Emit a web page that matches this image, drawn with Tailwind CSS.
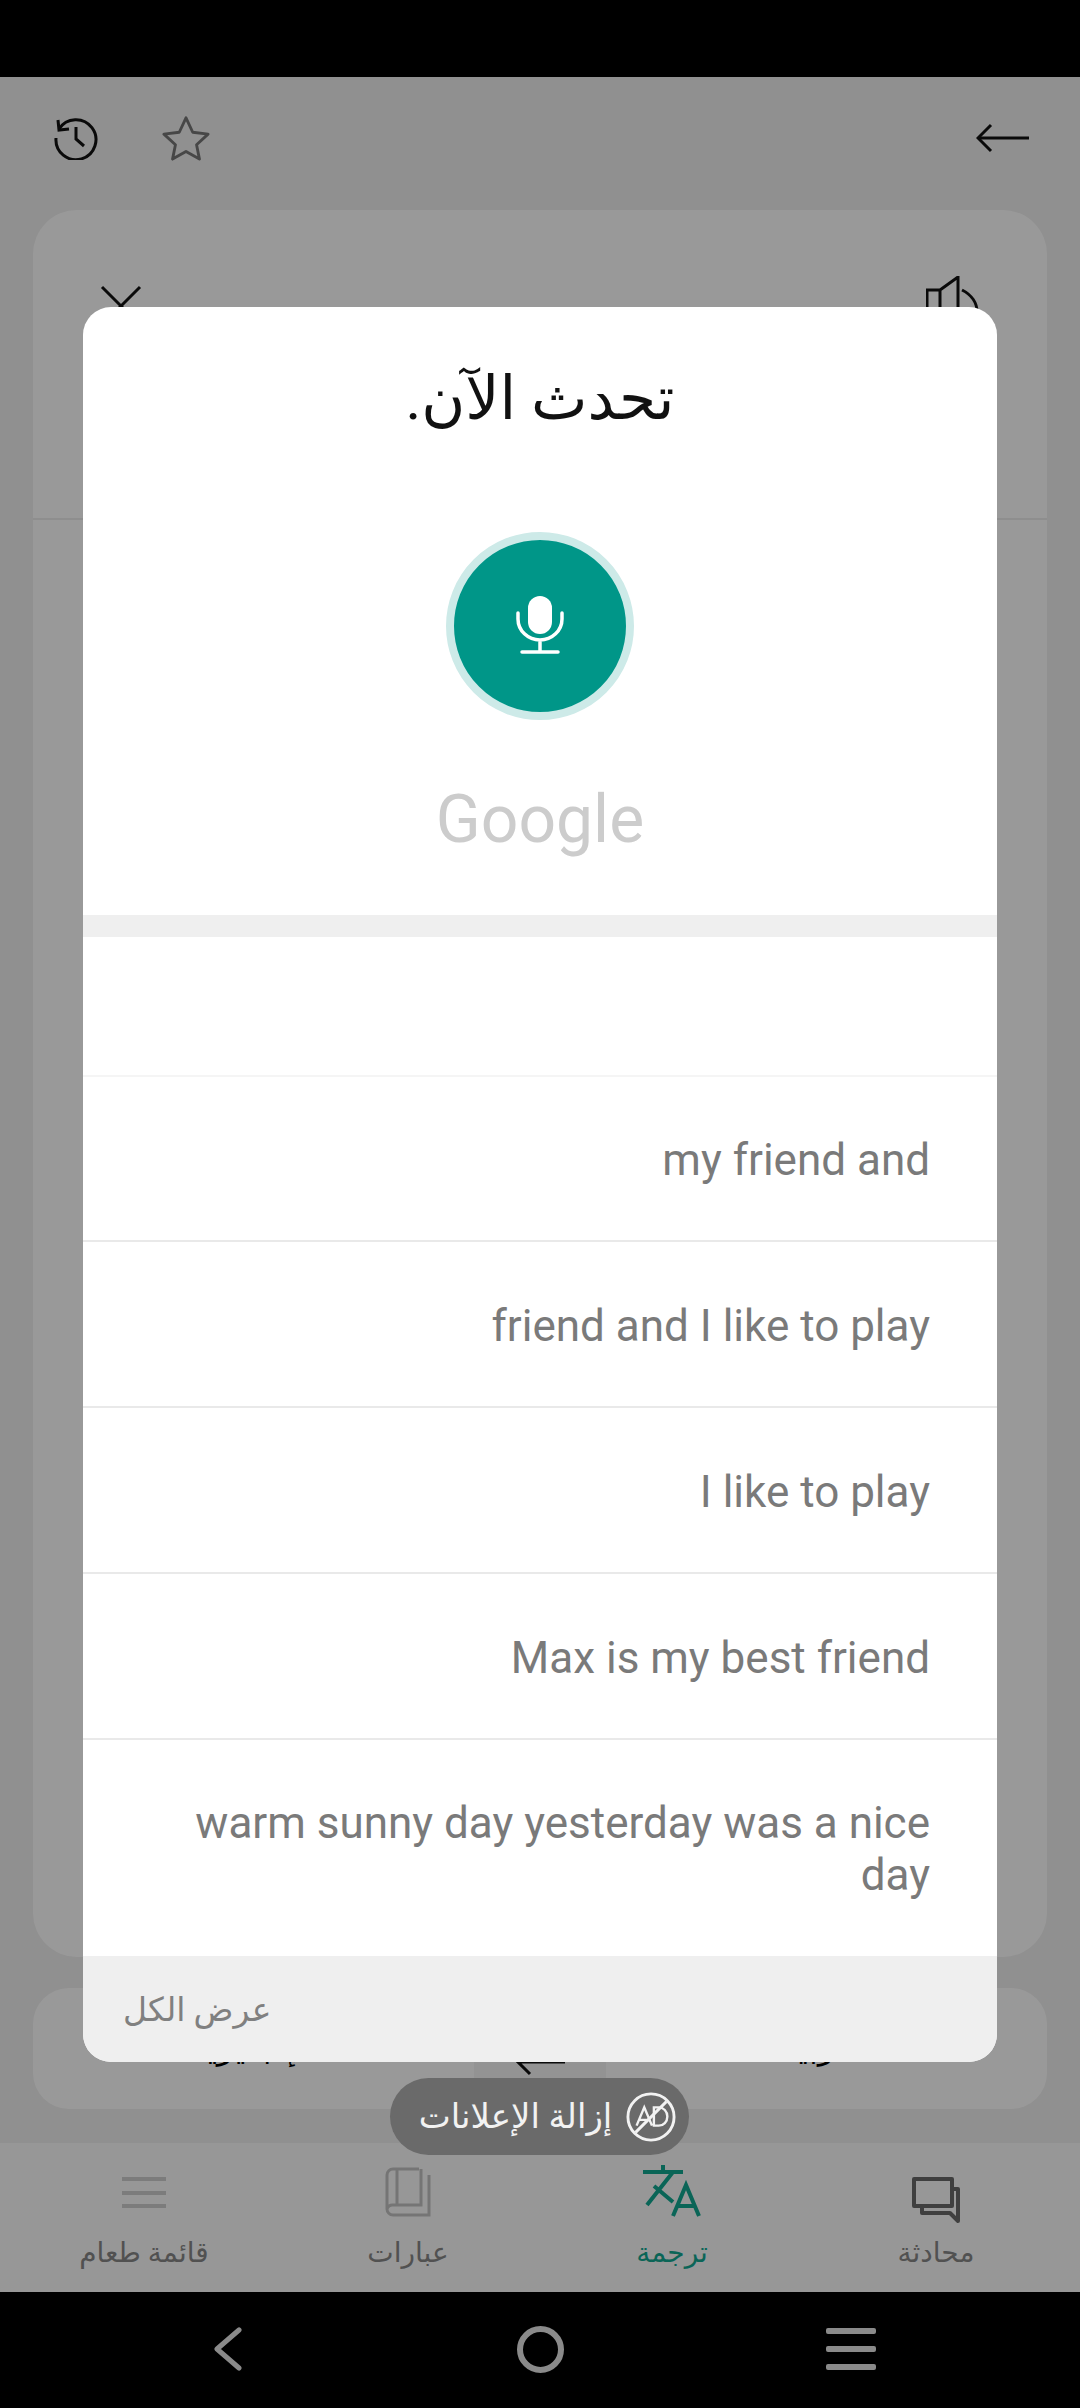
<!DOCTYPE html>
<html lang="ar">
<head>
  <meta charset="UTF-8">
  <title>تحدث الآن</title>
  <script src="https://cdn.jsdelivr.net/npm/@tailwindcss/browser@4"></script>
</head>
<body class="bg-black">
  <div class="relative w-[1080px] h-[2408px] overflow-hidden flex flex-col font-['Roboto','DejaVu_Sans',sans-serif]">
    <div class="h-[77px] shrink-0 bg-black"></div>

    <!-- page behind the dialog -->
    <div class="h-[2215px] shrink-0 bg-[#f0f0f0] flex flex-col">
      <div class="h-[133px] shrink-0 flex items-center justify-between pl-[54px] pr-[50px] pb-[12px]">
        <div class="flex items-center gap-[64px]">
          <svg class="w-[44px] h-[44px]" viewBox="0 0 44 44" fill="none" stroke="#111" stroke-width="3">
            <path d="M5 13A20 20 0 1 1 2 22"/><path d="M4 4l1 10 10-1"/><path d="M22 11v12l8 7"/>
          </svg>
          <svg class="w-[48px] h-[46px]" viewBox="0 0 50 46" fill="none" stroke="#777" stroke-width="3" stroke-linejoin="round">
            <path d="M25 2l7 15 16 2-12 11 3 15-14-8-14 8 3-15L2 19l16-2z"/>
          </svg>
        </div>
        <svg class="w-[54px] h-[30px]" viewBox="0 0 54 30" fill="none" stroke="#111" stroke-width="3">
          <path d="M53 15H3"/><path d="M15 2L2 15l13 13"/>
        </svg>
      </div>

      <div class="mx-[33px] h-[1747px] shrink-0 rounded-[44px] bg-white flex flex-col">
        <div class="h-[310px] shrink-0 border-b-2 border-[#ededed] flex justify-between pl-[66px] pr-[65px] pt-[66px]">
          <svg class="w-[44px] h-[44px] mt-[8px]" viewBox="0 0 44 44" fill="none" stroke="#111" stroke-width="3"><path d="M3 3l38 38M41 3L3 41"/></svg>
          <svg class="w-[56px] h-[60px]" viewBox="0 0 56 60" fill="none" stroke="#111" stroke-width="3"><path d="M1 14h13v46H1zM14 14L32 1v59M36 14c20 10 20 34 0 44"/></svg>
        </div>
      </div>

      <div class="mx-[33px] mt-[31px] h-[121px] shrink-0 rounded-[36px] bg-white grid grid-cols-[1fr_132px_1fr] text-black text-[34px]">
        <div class="flex items-end justify-center pb-[36px]">الإنجليزية</div>
        <div class="bg-[#f5f5f5] flex items-start justify-center pt-[64px]">
          <svg class="w-[50px] h-[24px]" viewBox="0 0 50 24" fill="none" stroke="#111" stroke-width="3"><path d="M50 10H3M15 0L3 10l12 12"/></svg>
        </div>
        <div class="flex items-end justify-center pb-[36px]">العربية</div>
      </div>

      <nav class="mt-[34px] flex-1 bg-[#fcfcfc] grid grid-cols-4 px-3 pt-[22px] text-[28px] text-[#888888]">
        <div class="flex flex-col items-center">
          <svg class="w-[46px] h-[50px] mt-[10px]" viewBox="0 0 46 50" fill="none" stroke="#cfcfcf" stroke-width="4"><path d="M1 4h44M1 18h44M1 31h44"/></svg>
          <span class="mt-[8px] leading-[40px]">قائمة طعام</span>
        </div>
        <div class="flex flex-col items-center">
          <svg class="w-[46px] h-[50px] mt-[2px]" viewBox="0 0 46 50" fill="none" stroke="#c4c4c4" stroke-width="3"><path d="M34 2H8a6 6 0 0 0-6 6v34a6 6 0 0 0 6 6h36V8M12 2v36M2 42a6 6 0 0 1 6-4h28V2"/></svg>
          <span class="mt-[16px] leading-[40px]">عبارات</span>
        </div>
        <div class="flex flex-col items-center text-[#12a892] font-medium">
          <svg class="w-[60px] h-[52px]" viewBox="0 0 60 52" fill="none" stroke="#12a892" stroke-width="4"><path d="M1 7h40M21 0v7M5 40L31 7M12 21l19 16M31 51l13-31 13 31M36 41h17"/></svg>
          <span class="mt-[16px] leading-[40px]">ترجمة</span>
        </div>
        <div class="flex flex-col items-center">
          <svg class="w-[48px] h-[46px] mt-[12px]" viewBox="0 0 48 46" fill="none" stroke="#6a6a6a" stroke-width="4" stroke-linejoin="round"><path d="M2 2h38v27H12l-10 0zM40 12h6v32l-8-8H10v-7"/></svg>
          <span class="mt-[10px] leading-[40px]">محادثة</span>
        </div>
      </nav>
    </div>

    <!-- system navigation -->
    <div class="flex-1 bg-black flex items-center pl-[213px] pb-[2px]">
      <svg class="w-[30px] h-[44px]" viewBox="0 0 30 44" fill="none" stroke="#8a8a8a" stroke-width="5" stroke-linecap="round" stroke-linejoin="round"><path d="M26 3L4 22l22 19"/></svg>
      <div class="ml-[274px] w-[47px] h-[47px] rounded-full border-[6px] border-[#8a8a8a]"></div>
      <div class="ml-[262px] flex flex-col gap-[12px]">
        <div class="w-[50px] h-[6px] rounded-[2px] bg-[#8a8a8a]"></div>
        <div class="w-[50px] h-[6px] rounded-[2px] bg-[#8a8a8a]"></div>
        <div class="w-[50px] h-[6px] rounded-[2px] bg-[#8a8a8a]"></div>
      </div>
    </div>

    <!-- scrim -->
    <div class="absolute left-0 right-0 top-[77px] h-[2215px] bg-black/40"></div>

    <!-- dialog -->
    <div class="absolute left-[83px] top-[307px] w-[914px] h-[1755px] rounded-[28px] overflow-hidden bg-white flex flex-col">
      <div class="h-[608px] shrink-0 flex flex-col items-center">
        <h1 dir="rtl" class="mt-[58px] mb-[6px] h-[68px] text-[60px] leading-[68px] text-[#111]">تحدث الآن.</h1>
        <div class="mt-[93px] w-[188px] h-[188px] rounded-full bg-[#009688] border-[8px] border-[#cdeae8] flex items-center justify-center">
          <svg class="w-[48px] h-[58px] mb-[2px]" viewBox="0 0 48 58" fill="none" stroke="#fff" stroke-width="3.5" stroke-linecap="round">
            <rect x="12" y="0" width="24" height="38" rx="12" fill="#fff" stroke="none"/>
            <path d="M2 17v6a22 21 0 0 0 44 0v-6M24 44v12M6 56h36"/>
          </svg>
        </div>
        <div class="mt-[60px] text-[66px] leading-[80px] text-[#cccccc]">Google</div>
      </div>
      <div class="h-[22px] shrink-0 bg-[#efefef]"></div>
      <ul class="flex-1 text-[44px] leading-[52px] text-[#7a7a7a] text-right">
        <li class="h-[140px] border-b-2 border-[#f5f5f5]"></li>
        <li class="h-[165px] pt-[3px] border-b-2 border-[#e9e9e9] flex items-center justify-end px-[67px]">my friend and</li>
        <li class="h-[166px] pt-[3px] border-b-2 border-[#e9e9e9] flex items-center justify-end px-[67px]">friend and I like to play</li>
        <li class="h-[166px] pt-[3px] border-b-2 border-[#e9e9e9] flex items-center justify-end px-[67px]">I like to play</li>
        <li class="h-[166px] pt-[3px] border-b-2 border-[#e9e9e9] flex items-center justify-end px-[67px]">Max is my best friend</li>
        <li class="h-[215px] pt-[3px] flex items-center justify-end px-[67px]"><span>warm sunny day yesterday was a nice day</span></li>
      </ul>
      <div class="h-[106px] shrink-0 bg-[#efefef] flex items-center pl-[40px] pt-[2px] text-[33px] text-[#808080]">
        <span>عرض الكل</span>
      </div>
    </div>

    <!-- remove ads pill -->
    <div class="absolute left-[390px] top-[2078px] w-[299px] h-[77px] rounded-full bg-[#6a6a6a] flex items-center justify-center gap-[14px] pl-[16px] text-[34px] text-[#f2f2f2]">
      <span>إزالة الإعلانات</span>
      <svg class="w-[50px] h-[50px]" viewBox="0 0 52 52" fill="none" stroke="#f2f2f2" stroke-width="3">
        <circle cx="26" cy="26" r="24"/>
        <path d="M10 42L42 10"/>
        <path d="M11 35l8-19 8 19M14 29h10M29 16v19h5c5 0 9-4 9-9.500s-4-9.500-9-9.500z" stroke-width="2.500"/>
      </svg>
    </div>
  </div>
</body>
</html>
